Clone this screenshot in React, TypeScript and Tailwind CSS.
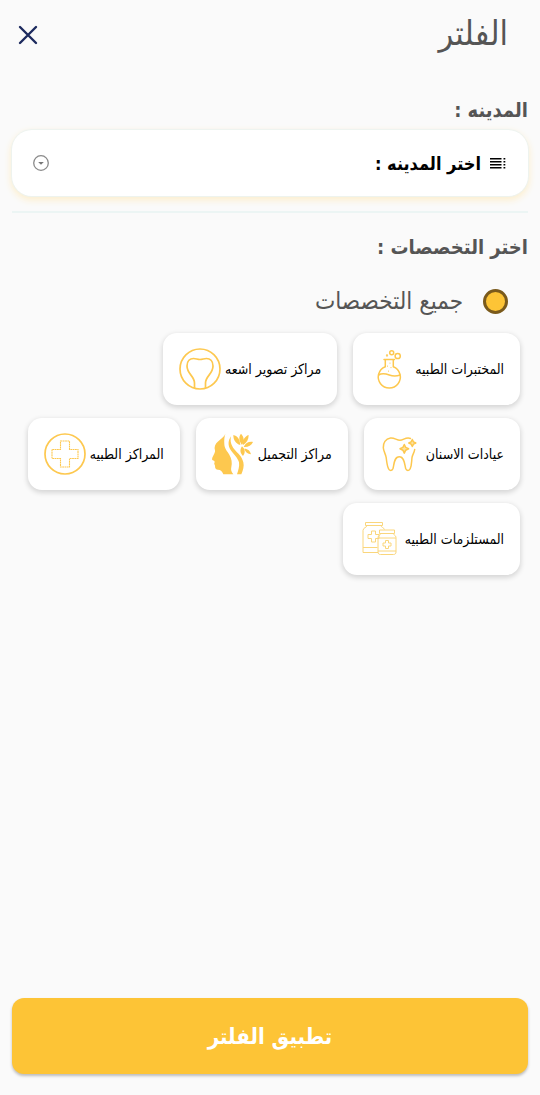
import { useState } from "react";
import type { ReactNode } from "react";

const gold = "#fdc84f";

function FlaskIcon() {
  return (
    <svg viewBox="0 0 42 42" className="size-[42px]" fill="none" stroke={gold} strokeWidth="1.500" strokeLinecap="round" strokeLinejoin="round" aria-hidden="true">
      <path d="M15 11.500h10.500M16.300 11.500v7.300a11 11 0 1 0 8 0v-7.300" />
      <path d="M9.500 27c3.500-2.200 7-1.500 10.800 0s7 1.500 10.800 0" />
      <circle cx="22.700" cy="4.700" r="2" />
      <circle cx="28.700" cy="8" r="2.600" />
      <circle cx="18" cy="7.500" r=".4" />
      <path d="M21 15v.1M18.500 18v.1M22 19.500v.1M19.500 23v.1" strokeWidth="1.200" />
    </svg>
  );
}

function BoneScanIcon() {
  return (
    <svg viewBox="0 0 42 42" className="size-[42px]" fill="none" stroke={gold} strokeWidth="1.700" aria-hidden="true">
      <circle cx="21" cy="21" r="20" />
      <path d="M15.500 40v-5c0-7-7.500-9-7.500-17 0-5 3-7.500 6.500-7.500 2.500 0 4 1 6.500 1s4-1 6.500-1c3.500 0 6.500 2.500 6.500 7.500 0 8-7.500 10-7.500 17v5" />
    </svg>
  );
}

function ToothIcon() {
  return (
    <svg viewBox="0 0 42 42" className="size-[42px]" fill="none" stroke={gold} strokeWidth="1.500" strokeLinejoin="round" strokeLinecap="round" aria-hidden="true">
      <path d="M30.500 5.500c-4.500-2-7 1.800-10.500 1.800C16.500 7.300 14.500 4.500 10.500 5 5.500 5.600 3 10 3.300 14.700c.3 4 2.400 6.300 2.900 10 .5 4 .8 8 2.300 11 1 2.300 3.700 2.300 4.500-.2 1.100-3.800 1-11.700 6.300-11.700s5.300 7.900 6.400 11.700c.8 2.500 3.500 2.500 4.500.2 1.500-3 1.300-7 1.800-11 .3-2.700 2.300-5 2.700-8.200" />
      <path d="M24.300 11.500l1.400 2.900 2.900 1.400-2.900 1.400-1.400 2.900-1.400-2.900-2.900-1.400 2.900-1.400zM32.300 6.500l1.200 2.300 2.300 1.200-2.300 1.200-1.200 2.300-1.200-2.300-2.300-1.200 2.300-1.200z" fill="#fde3a3" />
    </svg>
  );
}

function BeautyIcon() {
  return (
    <svg viewBox="12 15 126 126" className="size-[42px]" fill={gold} aria-hidden="true">
      <path d="M52 17C46 34 22 38 20 58c-1 5 2 8 1 13-2 8-9 16-9 23 0 4 7 3 8 7 0 3-2 4-1 7 0 2 2 3 2 6 0 8 3 11 9 11 8 0 13 6 16 14h30c-6-8-8-13-6-22 3-13 1-25-6-37-7-11-14-17-15-31-1-12 0-22 3-32z" />
      <path d="M69 25c-9 13-10 27-1 41 8 12 22 24 25 37 2 12-2 24-6 36h13c5-12 9-24 6-36-4-18-17-27-27-39-10-13-13-24-10-39z" />
      <path d="M99 17c9 9 11 22 3 34-9-12-11-24-3-34zM76 21c12 2 20 13 21 30-14-4-21-15-21-30zM122 21c0 14-6 24-17 30-1-15 5-26 17-30zM135 42c-5 11-15 16-28 15 5-11 15-17 28-15zM102 55c10 9 11 20 3 29-9-9-10-19-3-29zM109 62c11 0 18 7 20 17-10-1-17-7-20-17z" />
    </svg>
  );
}

function MedicalCenterIcon() {
  return (
    <svg viewBox="0 0 42 42" className="size-[42px]" fill="none" stroke={gold} aria-hidden="true">
      <circle cx="21" cy="21" r="20" strokeWidth="1.700" />
      <path d="M16.500 8h9v8.500H34v9h-8.500V34h-9v-8.500H8v-9h8.500z" strokeWidth="1.100" strokeDasharray="1.800 .5" />
    </svg>
  );
}

function SuppliesIcon() {
  return (
    <svg viewBox="0 0 42 42" className="size-[42px]" fill="none" stroke="#fad67c" strokeWidth="1" strokeLinejoin="round" aria-hidden="true">
      <path d="M6.500 4.500h17v3h-17zM8 7.500c0 2-4 2-4 5v22h15M22 7.500c0 2 3 2 3.500 4M4 29.500h14.500" />
      <path d="M12.500 13h4v3.500H20v4h-3.500V24h-4v-3.500H9v-4h3.500z" />
      <path d="M20.500 12h15v3.500h-15zM21.500 15.500c0 2-2.500 1.500-2.500 4V34c0 1.500.8 2.500 2.500 2.500h13c1.700 0 2.500-1 2.500-2.500V19.500c0-2.500-2.500-2-2.500-4M19 20h18M19 33h18" />
      <path d="M26.500 22.500h3V25H32v3h-2.500v2.500h-3V28H24v-3h2.500z" />
    </svg>
  );
}

const specialties: { label: string; icon: ReactNode }[] = [
  { label: "المختبرات الطبيه", icon: <FlaskIcon /> },
  { label: "مراكز تصوير اشعه", icon: <BoneScanIcon /> },
  { label: "عيادات الاسنان", icon: <ToothIcon /> },
  { label: "مراكز التجميل", icon: <BeautyIcon /> },
  { label: "المراكز الطبيه", icon: <MedicalCenterIcon /> },
  { label: "المستلزمات الطبيه", icon: <SuppliesIcon /> },
];

export default function App() {
  const [selected, setSelected] = useState<string | null>(null);

  return (
    <main dir="rtl" className="flex min-h-screen flex-col bg-[#fafafa] px-3 pb-[21px] font-['DejaVu_Sans_Condensed','DejaVu_Sans',sans-serif] text-[#555]">
      <header className="flex h-[70px] items-center justify-between pr-5">
        <h1 className="pb-1 text-[34px] leading-10">الفلتر</h1>
        <button type="button" aria-label="إغلاق" className="flex size-8 items-center justify-center text-[#1c2a5e]">
          <svg viewBox="0 0 20 20" className="size-5" stroke="currentColor" strokeWidth="2.400" strokeLinecap="round" aria-hidden="true">
            <path d="M2 2l16 16M18 2L2 18" />
          </svg>
        </button>
      </header>

      <section className="border-b-2 border-[#ecf5f4] pt-6 pb-[15px]">
        <label htmlFor="city" className="block text-[20px] leading-8 font-bold">المدينه :</label>
        <div className="mt-1 flex h-[66px] items-center gap-2 rounded-[20px] bg-white pr-[21px] pl-5 shadow-[0_0_1px_1px_#edf3f0,0_3px_7px_1px_#fdeecb]">
          <svg viewBox="0 0 18 12" className="h-3 w-[18px] shrink-0" fill="#000" aria-hidden="true">
            <path d="M1 1h11.500v1.400H1zM1 4h11.500v1.400H1zM1 7h11.500v1.400H1zM1 10h11.500v1.400H1zM14.500 1h1.800v1.400h-1.800zM14.500 4h1.800v1.400h-1.800zM14.500 7h1.800v1.400h-1.800zM14.500 10h1.800v1.400h-1.800z" />
          </svg>
          <select id="city" className="h-full min-w-0 flex-1 appearance-none bg-transparent text-[18px] font-bold text-black outline-none">
            <option>اختر المدينه :</option>
          </select>
          <svg viewBox="0 0 18 18" className="size-[18px] shrink-0" aria-hidden="true">
            <circle cx="9" cy="9" r="7.300" fill="none" stroke="#8a8a8a" strokeWidth="1.300" />
            <path d="M6.200 8h5.600L9 10.800z" fill="#777" />
          </svg>
        </div>
      </section>

      <section className="pt-[18px]">
        <h2 className="text-[20px] leading-8 font-bold">اختر التخصصات :</h2>
        <label className="mt-5 flex h-9 items-center gap-5 pr-5 text-[24px]">
          <input type="radio" name="scope" checked={selected === null} onChange={() => setSelected(null)} className="size-[25px] shrink-0 appearance-none rounded-full border-[3px] border-[#7a5a1c] bg-[#fdc436]" />
          جميع التخصصات
        </label>
        <div className="mt-[14px] flex flex-wrap gap-x-4 gap-y-[13px] px-2">
          {specialties.map(({ label, icon }) => (
            <button
              key={label}
              type="button"
              aria-pressed={selected === label}
              onClick={() => setSelected(label)}
              className="flex h-[72px] items-center gap-1 rounded-[14px] bg-white px-4 text-[14px] text-black shadow-[0_2px_5px_1px_#00000024]"
            >
              {label}
              {icon}
            </button>
          ))}
        </div>
      </section>

      <button type="button" className="mt-auto h-[76px] shrink-0 rounded-xl bg-[#fdc436] text-[22px] font-bold text-white shadow-[0_2px_3px_#00000040]">
        تطبيق الفلتر
      </button>
    </main>
  );
}
